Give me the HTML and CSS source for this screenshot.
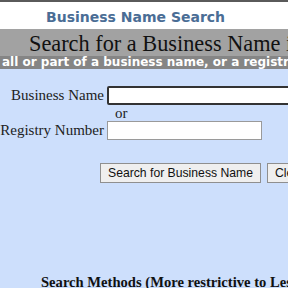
FILE: index.html
```html
<!DOCTYPE html>
<html>
<head>
<meta charset="utf-8">
<link rel="stylesheet" href="styles.css">
</head>
<body>
<div class="page">
  <div class="topbar"></div>
  <div class="title">Business Name Search</div>
  <div class="banner">Search for a Business Name in Illinois</div>
  <div class="sub">all or part of a business name, or a registry number</div>
  <div class="form">
    <div class="rows">
      <label class="lbl">Business Name</label>
      <input class="inp inp-wide focus" type="text">
      <span></span>
      <span class="or">or</span>
      <label class="lbl">Registry Number</label>
      <input class="inp" type="text">
    </div>
    <div class="buttons">
      <button class="btn">Search for Business Name</button>
      <button class="btn">Clear</button>
    </div>
    <div class="methods">Search Methods (More restrictive to Less restrictive)</div>
  </div>
</div>
</body>
</html>
```
FILE: styles.css
```css
html, body {
  margin: 0;
  padding: 0;
}
body {
  width: 288px;
  height: 288px;
  overflow: hidden;
  background: #cddffc;
}
.page {
  width: 600px;
}
.topbar {
  height: 2px;
  background: #5a5a5a;
}
.title {
  height: 27px;
  background: #ffffff;
  width: 288px;
  padding-left: 46px;
  box-sizing: border-box;
  font-family: "DejaVu Sans", sans-serif;
  font-weight: bold;
  font-size: 14px;
  line-height: 30px;
  color: #4a6d95;
  white-space: nowrap;
}
.banner {
  height: 27px;
  background: #a2a2a2;
  padding-left: 29px;
  font-family: "Liberation Serif", serif;
  font-size: 22.3px;
  line-height: 29px;
  color: #111;
  white-space: nowrap;
}
.sub {
  height: 13px;
  background: #858585;
  padding-left: 2px;
  font-family: "DejaVu Sans", sans-serif;
  font-weight: bold;
  font-size: 12px;
  line-height: 12px;
  color: #ffffff;
  white-space: nowrap;
}
.form {
  background: #cddffc;
  padding-top: 17px;
  font-family: "Liberation Serif", serif;
  font-size: 15px;
  color: #222;
}
.rows {
  display: grid;
  grid-template-columns: 104px auto;
  column-gap: 3px;
  align-items: center;
  width: 400px;
}
.lbl {
  text-align: right;
  white-space: nowrap;
}
.or {
  padding-left: 8px;
  line-height: 16px;
}
.inp {
  width: 155px;
  height: 19px;
  box-sizing: border-box;
  border: 1px solid #9a9a9a;
  background: #fff;
  margin: 0;
  padding: 1px 2px;
}
.inp-wide {
  width: 260px;
}
.focus {
  border: 2px solid #333;
  border-radius: 2px;
}
.buttons {
  display: flex;
  gap: 6px;
  padding-left: 100px;
  margin-top: 23px;
}
.btn {
  font-family: "Liberation Sans", Arial, sans-serif;
  font-size: 12.2px;
  height: 20px;
  padding: 1px 7px;
  border: 1px solid #8f8f8f;
  background: #efefef;
  color: #111;
  white-space: nowrap;
  border-radius: 0;
}
.methods {
  margin-top: 91px;
  padding-left: 41px;
  font-weight: bold;
  font-size: 14.6px;
  white-space: nowrap;
  color: #111;
}
```
